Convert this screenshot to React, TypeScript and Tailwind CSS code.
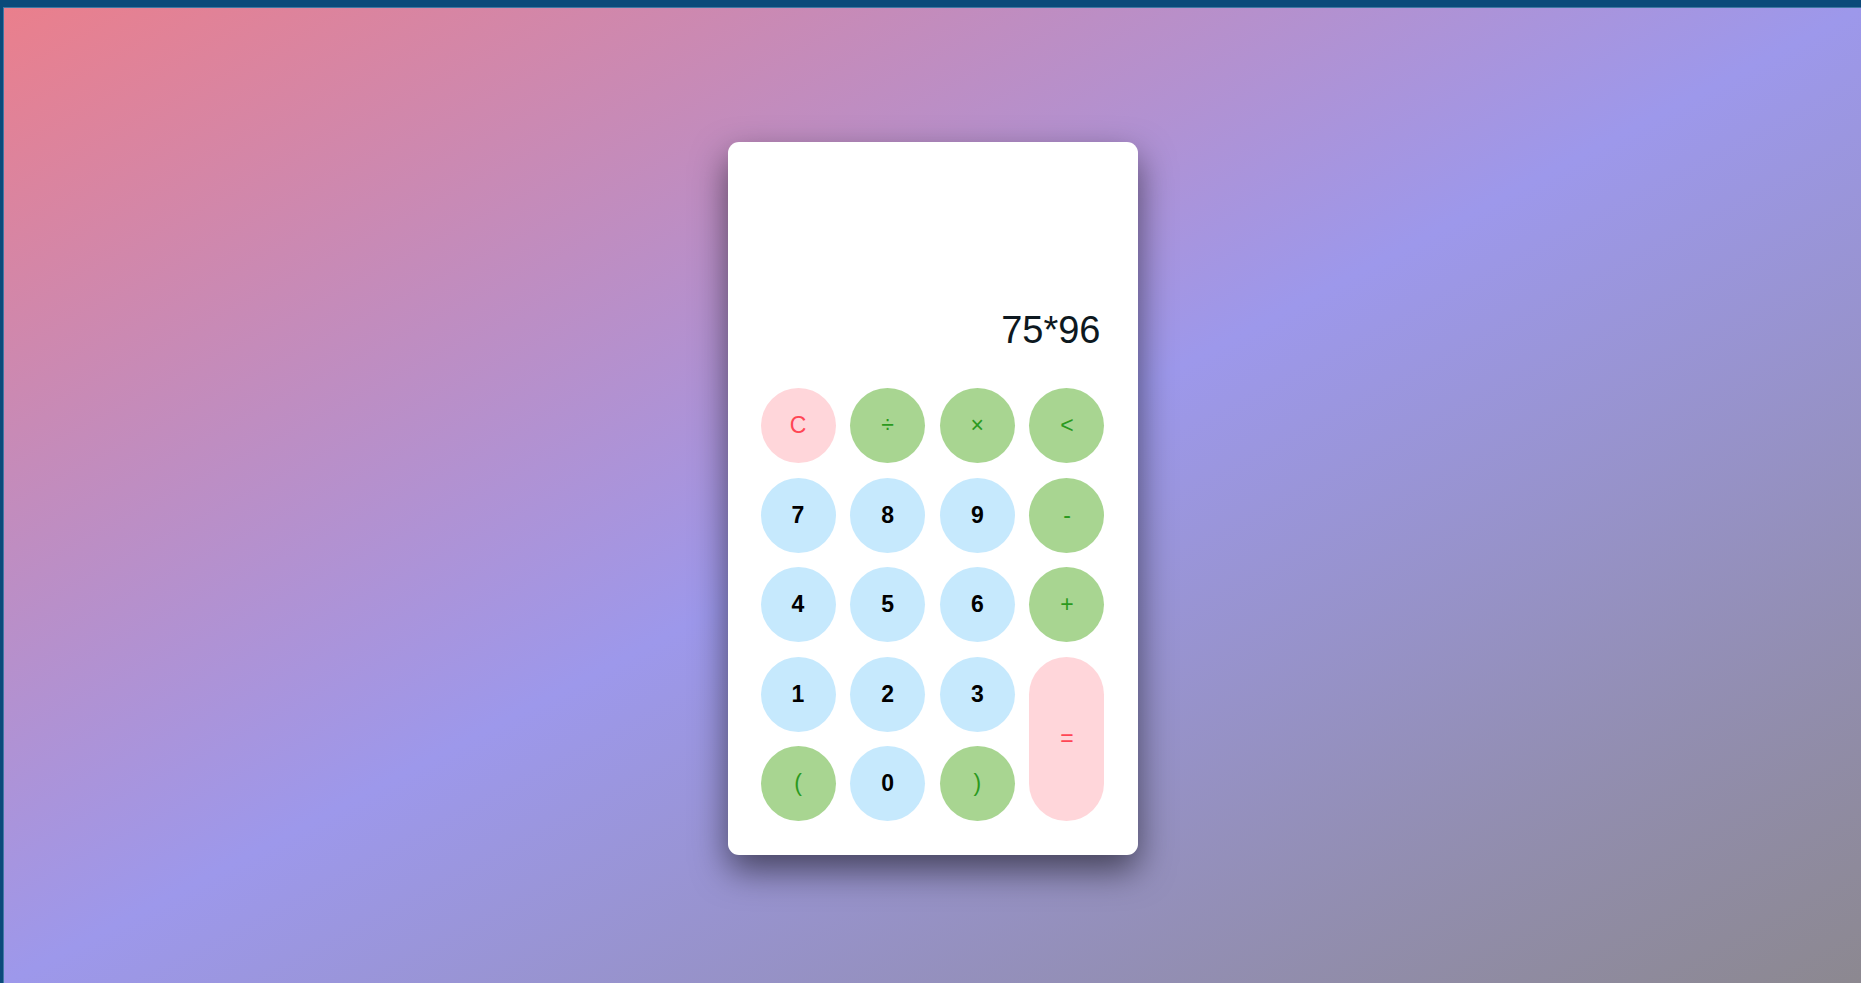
import { useState } from "react";

type Key = {
  label: string;
  kind: "num" | "op" | "clear" | "eq";
  value?: string;
};

const keys: Key[] = [
  { label: "C", kind: "clear" },
  { label: "÷", kind: "op", value: "/" },
  { label: "×", kind: "op", value: "*" },
  { label: "<", kind: "op" },
  { label: "7", kind: "num" },
  { label: "8", kind: "num" },
  { label: "9", kind: "num" },
  { label: "-", kind: "op" },
  { label: "4", kind: "num" },
  { label: "5", kind: "num" },
  { label: "6", kind: "num" },
  { label: "+", kind: "op" },
  { label: "1", kind: "num" },
  { label: "2", kind: "num" },
  { label: "3", kind: "num" },
  { label: "=", kind: "eq" },
  { label: "(", kind: "op" },
  { label: "0", kind: "num" },
  { label: ")", kind: "op" },
];

const styles = {
  num: "bg-[#c6e9fd] text-black font-bold",
  op: "bg-[#a8d591] text-[#2b9a1e]",
  clear: "bg-[#ffd6da] text-[#ff4655]",
  eq: "bg-[#ffd6da] text-[#ff4655] row-span-2 h-full",
};

const App = () => {
  const [expr, setExpr] = useState("75*96");

  const press = (k: Key) => {
    if (k.kind === "clear") return setExpr("");
    if (k.label === "<") return setExpr((e) => e.slice(0, -1));
    if (k.kind === "eq") {
      try {
        // eslint-disable-next-line no-new-func
        setExpr(String(Function(`return (${expr})`)()));
      } catch {
        setExpr("Error");
      }
      return;
    }
    setExpr((e) => e + (k.value ?? k.label));
  };

  return (
    <div className="min-h-screen bg-[#0b4a7a] pt-[7px] pl-[3px] font-['Liberation_Sans',Arial,sans-serif]">
      <div className="min-h-[976px] border-t border-l border-[#3f78a4] bg-[linear-gradient(to_bottom_right,#ea7f8c,#9d98eb_50%,#8c8890)] flex items-center justify-center pt-[6px]">
        {/* Calculator card */}
        <div className="w-[410px] bg-white rounded-[11px] p-[33px] pb-[34px] shadow-[0_15px_35px_rgba(0,0,0,0.55)]">
          <div className="h-[174px] flex items-end justify-end pr-[4px]">
            <span className="text-[38px] leading-[38px] text-[#0d1820]">{expr}</span>
          </div>

          <div className="mt-[39px] grid grid-cols-[repeat(4,75px)] justify-between gap-y-[14.5px]">
            {keys.map((k) => (
              <button
                key={k.label}
                onClick={() => press(k)}
                className={`w-[75px] ${k.kind === "eq" ? "" : "h-[75px]"} rounded-full flex items-center justify-center text-[23px] leading-none ${styles[k.kind]}`}
              >
                {k.label}
              </button>
            ))}
          </div>
        </div>
      </div>
    </div>
  );
};

export default App;
